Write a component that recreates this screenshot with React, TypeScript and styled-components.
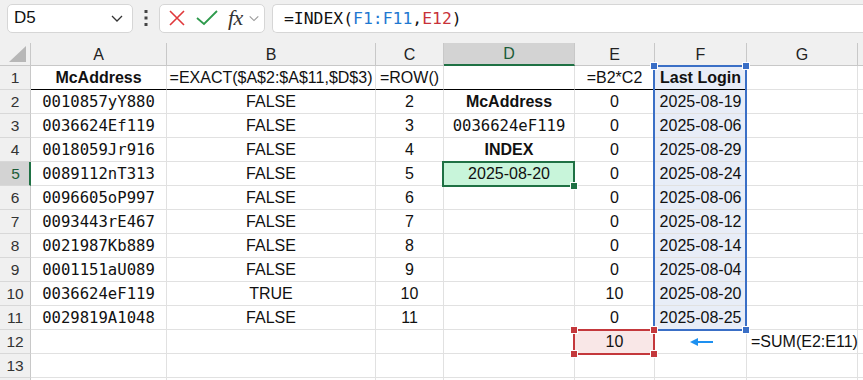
import React from "react";
import styled, { createGlobalStyle, css } from "styled-components";

const Global = createGlobalStyle`
  html, body { margin: 0; padding: 0; background: #f0f0f0; overflow: hidden; }
  body { font-family: "Liberation Sans", Arial, sans-serif; }
`;

const Window = styled.div`
  width: 863px;
  height: 380px;
  display: flex;
  flex-direction: column;
  background: #f0f0f0;
  overflow: hidden;
`;

const FormulaBar = styled.div`
  display: flex;
  align-items: center;
  height: 30px;
  padding: 3px 0 0 7px;
  box-sizing: content-box;
  flex-shrink: 0;
`;

const Box = styled.div<{ $w?: number }>`
  height: 29px;
  box-sizing: border-box;
  background: #fff;
  border: 1px solid #d6d6d6;
  border-radius: 5px;
  display: flex;
  align-items: center;
  ${(p) => (p.$w ? `width: ${p.$w}px;` : "flex: 1;")}
`;

const NameBox = styled(Box)`
  padding: 0 8px 0 6px;
  justify-content: space-between;
  font-size: 17px;
  color: #111;
`;

const Dots = styled.div`
  width: 26px;
  display: flex;
  justify-content: center;
`;

const FxBox = styled(Box)`
  padding-left: 6px;
`;

const FormulaInput = styled(Box)`
  margin-left: 7px;
  border-right: none;
  border-radius: 5px 0 0 5px;
  padding-left: 11px;
  font-family: "DejaVu Sans Mono", monospace;
  font-size: 16.4px;
  color: #111;
  white-space: pre;
`;

const Ref = styled.span<{ $c: string }>`
  color: ${(p) => p.$c};
`;

const FxText = styled.span`
  font-family: "Liberation Serif", "DejaVu Serif", serif;
  font-style: italic;
  font-size: 22px;
  color: #333;
  margin: 0 5px 0 9px;
  letter-spacing: -0.5px;
`;

const Sheet = styled.div`
  margin-top: 10px;
  display: grid;
  grid-template-columns: 31px 136px 209px 68px 131px 80px 92px 111px 1fr;
  grid-template-rows: 23px repeat(14, 24px);
  background: #fff;
  position: relative;
  flex-shrink: 0;
`;

const Corner = styled.div`
  background: #f0f0f0;
  border-right: 1px solid #c8c8c8;
  border-bottom: 1px solid #c8c8c8;
  box-sizing: border-box;
  display: flex;
  align-items: flex-end;
  justify-content: flex-end;
  padding: 0 4px 3px 0;
`;

const ColHeader = styled.div<{ $sel?: boolean }>`
  background: ${(p) => (p.$sel ? "#d3d3d3" : "#f0f0f0")};
  border-right: 1px solid #c8c8c8;
  border-bottom: ${(p) => (p.$sel ? "2px solid #1f7144" : "1px solid #c8c8c8")};
  box-sizing: border-box;
  display: flex;
  align-items: center;
  justify-content: center;
  font-size: 16px;
  color: ${(p) => (p.$sel ? "#1c5c38" : "#222")};
  padding-top: 1px;
`;

const RowHeader = styled.div<{ $sel?: boolean }>`
  background: ${(p) => (p.$sel ? "#d3d3d3" : "#f0f0f0")};
  border-right: ${(p) => (p.$sel ? "2px solid #1f7144" : "1px solid #c8c8c8")};
  border-bottom: 1px solid #d8d8d8;
  box-sizing: border-box;
  display: flex;
  align-items: center;
  justify-content: center;
  font-size: 15.5px;
  color: ${(p) => (p.$sel ? "#1c5c38" : "#333")};
  padding-left: ${(p) => (p.$sel ? "2px" : "0")};
`;

type Kind = "text" | "bold" | "mono";

const Cell = styled.div<{
  $kind?: Kind;
  $align?: "center" | "left";
  $fill?: string;
  $line?: boolean;
}>`
  box-sizing: border-box;
  border-right: 1px solid #e1e1e1;
  border-bottom: 1px solid ${(p) => (p.$line ? "#000" : "#e1e1e1")};
  background: ${(p) => p.$fill || "#fff"};
  display: flex;
  align-items: center;
  justify-content: ${(p) => (p.$align === "left" ? "flex-start" : "center")};
  padding: 1px 4px 0;
  white-space: nowrap;
  overflow: visible;
  font-size: 16px;
  color: #111;
  ${(p) =>
    p.$kind === "bold" &&
    css`
      font-weight: bold;
    `}
  ${(p) =>
    p.$kind === "mono" &&
    css`
      font-family: "DejaVu Sans Mono", monospace;
      font-size: 15.6px;
    `}
`;

const Overlay = styled.div<{ $c: string; $area: string }>`
  grid-area: ${(p) => p.$area};
  position: absolute;
  top: -1px;
  bottom: -1px;
  left: -2px;
  right: 0;
  border: 2px solid ${(p) => p.$c};
  pointer-events: none;
  z-index: 2;
`;

const Handle = styled.span<{ $c: string; $pos: string }>`
  position: absolute;
  width: 6px;
  height: 6px;
  background: ${(p) => p.$c};
  border: 1px solid #fff;
  ${(p) => p.$pos}
`;

const tl = "top: -5px; left: -5px;";
const tr = "top: -5px; right: -5px;";
const bl = "bottom: -5px; left: -5px;";
const br = "bottom: -5px; right: -5px;";

const Chevron = ({ color = "#333", size = 14 }: { color?: string; size?: number }) => (
  <svg width={size} height={size} viewBox="0 0 14 14">
    <path d="M2 5 L7 10 L12 5" fill="none" stroke={color} strokeWidth="1.3" />
  </svg>
);

const cols = ["A", "B", "C", "D", "E", "F", "G", ""];

type C = { t: string; k?: Kind; fill?: string; align?: "left" | "center"; arrow?: boolean };

const F_FILL = "#e8edf7";

const data: C[][] = [
  [
    { t: "McAddress", k: "bold" },
    { t: "=EXACT($A$2:$A$11,$D$3)" },
    { t: "=ROW()" },
    { t: "" },
    { t: "=B2*C2" },
    { t: "Last Login", k: "bold", fill: F_FILL },
    { t: "" },
  ],
  [{ t: "0010857yY880", k: "mono" }, { t: "FALSE" }, { t: "2" }, { t: "McAddress", k: "bold" }, { t: "0" }, { t: "2025-08-19", fill: F_FILL }, { t: "" }],
  [{ t: "0036624Ef119", k: "mono" }, { t: "FALSE" }, { t: "3" }, { t: "0036624eF119", k: "mono" }, { t: "0" }, { t: "2025-08-06", fill: F_FILL }, { t: "" }],
  [{ t: "0018059Jr916", k: "mono" }, { t: "FALSE" }, { t: "4" }, { t: "INDEX", k: "bold" }, { t: "0" }, { t: "2025-08-29", fill: F_FILL }, { t: "" }],
  [{ t: "0089112nT313", k: "mono" }, { t: "FALSE" }, { t: "5" }, { t: "2025-08-20", fill: "#c8f5da" }, { t: "0" }, { t: "2025-08-24", fill: F_FILL }, { t: "" }],
  [{ t: "0096605oP997", k: "mono" }, { t: "FALSE" }, { t: "6" }, { t: "" }, { t: "0" }, { t: "2025-08-06", fill: F_FILL }, { t: "" }],
  [{ t: "0093443rE467", k: "mono" }, { t: "FALSE" }, { t: "7" }, { t: "" }, { t: "0" }, { t: "2025-08-12", fill: F_FILL }, { t: "" }],
  [{ t: "0021987Kb889", k: "mono" }, { t: "FALSE" }, { t: "8" }, { t: "" }, { t: "0" }, { t: "2025-08-14", fill: F_FILL }, { t: "" }],
  [{ t: "0001151aU089", k: "mono" }, { t: "FALSE" }, { t: "9" }, { t: "" }, { t: "0" }, { t: "2025-08-04", fill: F_FILL }, { t: "" }],
  [{ t: "0036624eF119", k: "mono" }, { t: "TRUE" }, { t: "10" }, { t: "" }, { t: "10" }, { t: "2025-08-20", fill: F_FILL }, { t: "" }],
  [{ t: "0029819A1048", k: "mono" }, { t: "FALSE" }, { t: "11" }, { t: "" }, { t: "0" }, { t: "2025-08-25", fill: F_FILL }, { t: "" }],
  [{ t: "" }, { t: "" }, { t: "" }, { t: "" }, { t: "10", fill: "#f9e7e7" }, { t: "", arrow: true }, { t: "=SUM(E2:E11)", align: "left" }],
  [{ t: "" }, { t: "" }, { t: "" }, { t: "" }, { t: "" }, { t: "" }, { t: "" }],
  [{ t: "" }, { t: "" }, { t: "" }, { t: "" }, { t: "" }, { t: "" }, { t: "" }],
];

const Arrow = () => (
  <svg width="26" height="10" viewBox="0 0 26 10" style={{ marginLeft: 3 }}>
    <path d="M3 5 H24" stroke="#1e90f0" strokeWidth="2" />
    <path d="M1 5 L9 1 L9 9 Z" fill="#1e90f0" />
  </svg>
);

export default function App() {
  return (
    <Window>
      <Global />
      <FormulaBar>
        <NameBox $w={126}>
          <span>D5</span>
          <Chevron />
        </NameBox>
        <Dots>
          <svg width="4" height="18" viewBox="0 0 4 18">
            <rect x="0.5" y="1" width="3" height="3" fill="#444" />
            <rect x="0.5" y="7.5" width="3" height="3" fill="#444" />
            <rect x="0.5" y="14" width="3" height="3" fill="#444" />
          </svg>
        </Dots>
        <FxBox $w={106}>
          <svg width="20" height="20" viewBox="0 0 20 20" style={{ marginLeft: 1 }}>
            <path d="M3 3 L17 17 M17 3 L3 17" stroke="#e0383b" strokeWidth="1.6" fill="none" />
          </svg>
          <svg width="24" height="20" viewBox="0 0 24 20" style={{ marginLeft: 8 }}>
            <path d="M2 10 L9 16 L22 3" stroke="#2e9a4c" strokeWidth="1.8" fill="none" />
          </svg>
          <FxText>fx</FxText>
          <Chevron color="#999" size={12} />
        </FxBox>
        <FormulaInput>
          =INDEX(<Ref $c="#1f78d1">F1:F11</Ref>,<Ref $c="#c8323a">E12</Ref>)
        </FormulaInput>
      </FormulaBar>
      <Sheet>
        <Corner>
          <svg width="17" height="16" viewBox="0 0 17 16">
            <path d="M17 0 L17 16 L0 16 Z" fill="#b7b7b7" />
          </svg>
        </Corner>
        {cols.map((c) => (
          <ColHeader key={c || "x"} $sel={c === "D"}>
            {c}
          </ColHeader>
        ))}
        {data.map((row, r) => (
          <React.Fragment key={r}>
            <RowHeader $sel={r === 4}>{r + 1}</RowHeader>
            {row.map((cell, ci) => (
              <Cell
                key={ci}
                $kind={cell.k}
                $fill={cell.fill}
                $align={cell.align}
                $line={r === 0 && ci < 6}
              >
                {cell.arrow ? <Arrow /> : cell.t}
              </Cell>
            ))}
            <Cell />
          </React.Fragment>
        ))}
        <Overlay $c="#1f7144" $area="6 / 5 / 7 / 6">
          <Handle $c="#1f7144" $pos={br} />
        </Overlay>
        <Overlay $c="#3a6fc6" $area="2 / 7 / 13 / 8">
          <Handle $c="#3a6fc6" $pos={tl} />
          <Handle $c="#3a6fc6" $pos={tr} />
          <Handle $c="#3a6fc6" $pos={br} />
          <Handle $c="#3a6fc6" $pos={bl} />
        </Overlay>
        <Overlay $c="#c4383c" $area="13 / 6 / 14 / 7">
          <Handle $c="#c4383c" $pos={tl} />
          <Handle $c="#c4383c" $pos={tr} />
          <Handle $c="#c4383c" $pos={bl} />
          <Handle $c="#c4383c" $pos={br} />
        </Overlay>
      </Sheet>
    </Window>
  );
}
